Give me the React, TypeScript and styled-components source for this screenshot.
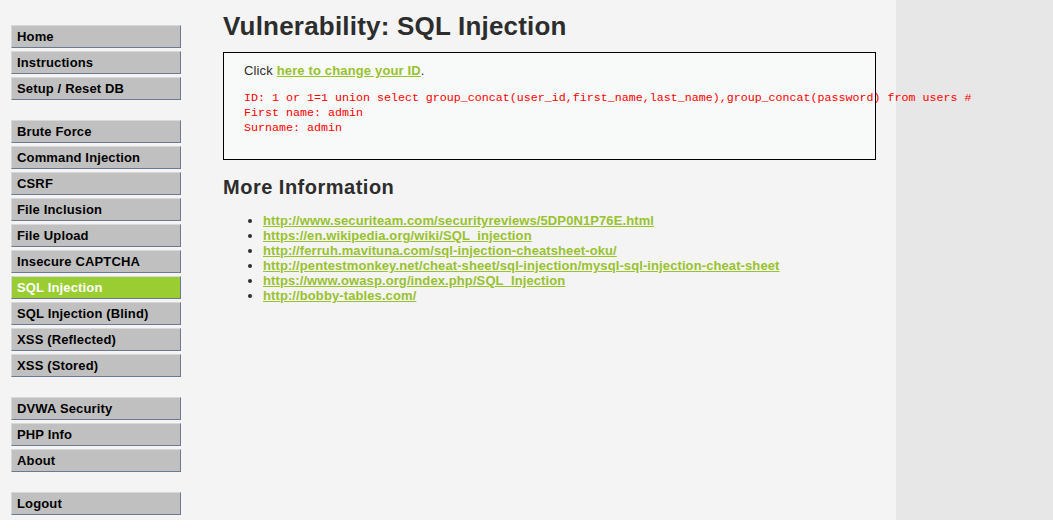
import React from "react";
import styled, { createGlobalStyle } from "styled-components";

const GlobalStyle = createGlobalStyle`
  html, body {
    margin: 0;
    padding: 0;
    background: #e7e7e7;
  }
  body {
    font-family: "Liberation Sans", Arial, sans-serif;
    font-size: 13px;
    color: #2f2f2f;
  }
`;

const Page = styled.div`
  width: 896px;
  min-height: 520px;
  background: #f4f4f4;
  display: flex;
  align-items: flex-start;
`;

const Sidebar = styled.nav`
  width: 170px;
  padding: 25px 0 0 11px;
  display: flex;
  flex-direction: column;
  gap: 20px;
`;

const MenuGroup = styled.ul`
  list-style: none;
  margin: 0;
  padding: 0;
  display: flex;
  flex-direction: column;
  gap: 3px;
`;

const MenuItem = styled.li<{ $selected?: boolean }>`
  box-sizing: border-box;
  height: 23px;
  line-height: 21px;
  padding-left: 5px;
  border-top: 1px solid #d8d8d8;
  border-left: 1px solid #d8d8d8;
  border-right: 1px solid #6b7a93;
  border-bottom: 1px solid #6b7a93;
  background: ${(p) => (p.$selected ? "#9acd32" : "#c0c0c0")};
  color: ${(p) => (p.$selected ? "#ffffff" : "#000000")};
  font-weight: bold;
  font-size: 13px;
  letter-spacing: 0.15px;
  white-space: nowrap;
`;

const Main = styled.main`
  margin-left: 42px;
  flex: 1;
`;

const Title = styled.h1`
  margin: 0;
  padding-top: 11px;
  font-size: 26px;
  line-height: 30px;
  letter-spacing: 0.2px;
  font-weight: bold;
  color: #2d2d2d;
`;

const Box = styled.div`
  box-sizing: border-box;
  width: 653px;
  height: 108px;
  margin-top: 11px;
  border: 1px solid #000;
  background: #f8f9f9;
  padding: 10px 20px 0 20px;
`;

const Para = styled.p`
  margin: 0;
  line-height: 15px;
  letter-spacing: 0.15px;
`;

const Link = styled.a`
  color: #98c22e;
  font-weight: bold;
  text-decoration: underline;
`;

const Code = styled.pre`
  margin: 13px 0 0 0;
  font-family: "Liberation Mono", "Courier New", monospace;
  font-size: 11.67px;
  line-height: 15px;
  letter-spacing: 0;
  color: #ff0000;
  white-space: pre;
  overflow: visible;
`;

const SubTitle = styled.h2`
  margin: 16px 0 0 0;
  font-size: 20px;
  line-height: 23px;
  letter-spacing: 0.5px;
  font-weight: bold;
  color: #2d2d2d;
`;

const LinkList = styled.ul`
  margin: 14px 0 0 0;
  padding-left: 40px;
  list-style: disc;
  line-height: 15px;
  letter-spacing: 0.1px;
`;

const menuGroups: { label: string; selected?: boolean }[][] = [
  [{ label: "Home" }, { label: "Instructions" }, { label: "Setup / Reset DB" }],
  [
    { label: "Brute Force" },
    { label: "Command Injection" },
    { label: "CSRF" },
    { label: "File Inclusion" },
    { label: "File Upload" },
    { label: "Insecure CAPTCHA" },
    { label: "SQL Injection", selected: true },
    { label: "SQL Injection (Blind)" },
    { label: "XSS (Reflected)" },
    { label: "XSS (Stored)" },
  ],
  [{ label: "DVWA Security" }, { label: "PHP Info" }, { label: "About" }],
  [{ label: "Logout" }],
];

const links = [
  "http://www.securiteam.com/securityreviews/5DP0N1P76E.html",
  "https://en.wikipedia.org/wiki/SQL_injection",
  "http://ferruh.mavituna.com/sql-injection-cheatsheet-oku/",
  "http://pentestmonkey.net/cheat-sheet/sql-injection/mysql-sql-injection-cheat-sheet",
  "https://www.owasp.org/index.php/SQL_Injection",
  "http://bobby-tables.com/",
];

export default function App() {
  return (
    <>
      <GlobalStyle />
      <Page>
        <Sidebar>
          {menuGroups.map((group, i) => (
            <MenuGroup key={i}>
              {group.map((item) => (
                <MenuItem key={item.label} $selected={item.selected}>
                  {item.label}
                </MenuItem>
              ))}
            </MenuGroup>
          ))}
        </Sidebar>
        <Main>
          <Title>Vulnerability: SQL Injection</Title>
          <Box>
            <Para>
              Click <Link href="#">here to change your ID</Link>.
            </Para>
            <Code>
              {"ID: 1 or 1=1 union select group_concat(user_id,first_name,last_name),group_concat(password) from users #\nFirst name: admin\nSurname: admin"}
            </Code>
          </Box>
          <SubTitle>More Information</SubTitle>
          <LinkList>
            {links.map((l) => (
              <li key={l}>
                <Link href="#">{l}</Link>
              </li>
            ))}
          </LinkList>
        </Main>
      </Page>
    </>
  );
}
